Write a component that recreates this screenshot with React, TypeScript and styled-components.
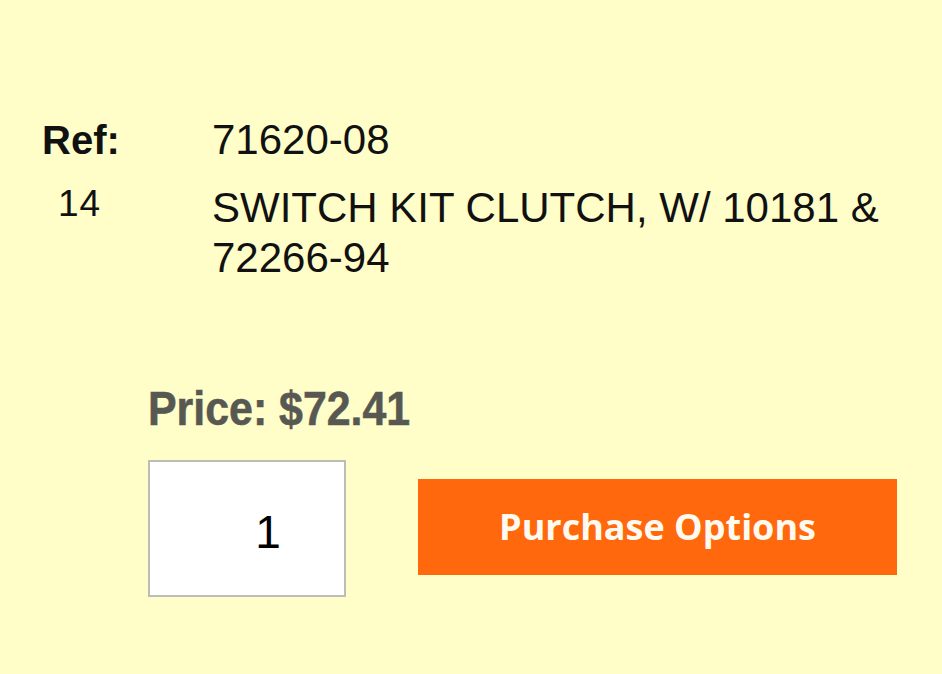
import React from "react";
import styled, { createGlobalStyle } from "styled-components";

const Global = createGlobalStyle`
  html, body {
    margin: 0;
    padding: 0;
    background: #fffdc8;
  }
  body {
    font-family: "Liberation Sans", Arial, sans-serif;
    color: #111;
  }
`;

const Page = styled.div`
  width: 942px;
  height: 674px;
  box-sizing: border-box;
  padding-top: 115px;
  background: #fffdc8;
  display: flex;
  flex-direction: column;
`;

const RefTable = styled.div`
  display: grid;
  grid-template-columns: 212px 1fr;
  row-gap: 18px;
  font-size: 42px;
  line-height: 50px;
`;

const Label = styled.div<{ $bold?: boolean; $indent?: number; $lift?: number; $size?: number }>`
  padding-left: ${(p) => 42 + (p.$indent ?? 0)}px;
  font-weight: ${(p) => (p.$bold ? 700 : 400)};
  font-size: ${(p) => p.$size ?? 42}px;
  margin-top: ${(p) => -(p.$lift ?? 0)}px;
  letter-spacing: ${(p) => (p.$bold ? 0 : 1)}px;
`;

const Value = styled.div`
  padding-right: 30px;
`;

const PriceSection = styled.div`
  margin-top: 97px;
  padding-left: 148px;
  display: flex;
  flex-direction: column;
`;

const Price = styled.div`
  font-family: "Liberation Sans", Arial, sans-serif;
  font-weight: 700;
  font-size: 49px;
  line-height: 56px;
  color: #585853;
  transform: scaleX(0.875);
  transform-origin: left center;
  white-space: nowrap;
  -webkit-text-stroke: 0.6px #585853;
`;

const ActionRow = styled.div`
  margin-top: 24px;
  display: flex;
  align-items: flex-start;
  gap: 72px;
`;

const Qty = styled.input`
  box-sizing: border-box;
  width: 198px;
  height: 137px;
  border: 2px solid #bdbdb8;
  background: #fff;
  font-family: "Liberation Sans", Arial, sans-serif;
  font-size: 46px;
  color: #000;
  text-align: center;
  padding: 6px 0 0 42px;
  outline: none;
`;

const PurchaseButton = styled.button`
  margin-top: 19px;
  width: 479px;
  height: 96px;
  border: none;
  background: #ff680c;
  color: #fffaf0;
  font-family: "Open Sans", sans-serif;
  font-weight: 700;
  font-size: 36px;
  cursor: pointer;
  padding: 0 0 2px;
`;

export default function App() {
  return (
    <>
      <Global />
      <Page>
        <RefTable>
          <Label $bold $size={40}>Ref:</Label>
          <Value>71620-08</Value>
          <Label $indent={16} $lift={4} $size={37}>14</Label>
          <Value>SWITCH KIT CLUTCH, W/ 10181 &amp; 72266-94</Value>
        </RefTable>
        <PriceSection>
          <Price>Price: $72.41</Price>
          <ActionRow>
            <Qty type="text" defaultValue="1" readOnly />
            <PurchaseButton>Purchase Options</PurchaseButton>
          </ActionRow>
        </PriceSection>
      </Page>
    </>
  );
}
